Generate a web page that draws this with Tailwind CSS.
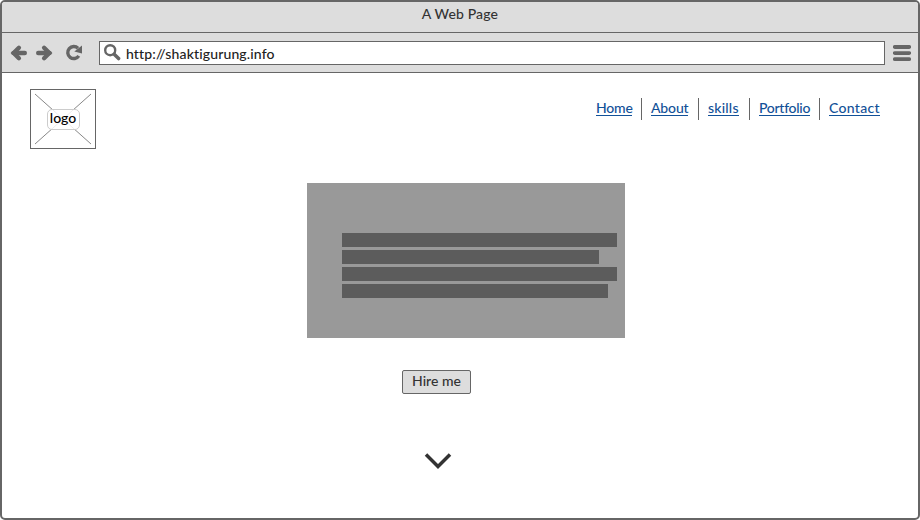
<!DOCTYPE html>
<html lang="en">
<head>
<meta charset="utf-8">
<title>A Web Page</title>
<script src="https://cdn.jsdelivr.net/npm/@tailwindcss/browser@4"></script>
</head>
<body class="bg-white font-['Lato','Open_Sans',sans-serif] text-[14px] leading-[18px] font-medium text-[#333]">
<div class="flex h-[520px] w-[920px] flex-col overflow-hidden rounded-[5px] border-2 border-[#666] bg-white">
  <header class="flex h-[31px] shrink-0 justify-center border-b border-[#666] bg-[#ddd] pt-[3px]">
    <span class="tracking-[0.15px] whitespace-nowrap">A Web Page</span>
  </header>
  <div class="flex h-10 shrink-0 items-center border-b border-[#666] bg-[#ddd] pl-[8px]">
    <svg class="mr-[8px]" width="18" height="18" viewBox="0 0 18 18" fill="none" stroke="#666" stroke-width="4.4"><path d="M3.500 9H14.800" stroke-linecap="round"/><path d="M8.900 3.800L3.700 9L8.900 14.200" stroke-linecap="round"/></svg>
    <svg class="mr-[11px]" width="18" height="18" viewBox="0 0 18 18" fill="none" stroke="#666" stroke-width="4.4"><path d="M2.200 9H13.500" stroke-linecap="round"/><path d="M8.100 3.800L13.300 9L8.100 14.200" stroke-linecap="round"/></svg>
    <svg class="mr-[16px]" width="18" height="18" viewBox="0 0 18 18"><path d="M13 4.300A6 6 0 1 0 13.800 11.800" fill="none" stroke="#666" stroke-width="3.400"/><path d="M17 1.500V9.600L9.300 7.600Z" fill="#666"/></svg>
    <div class="flex h-6 w-[786px] items-center border border-[#666] bg-white pl-1">
      <svg class="mr-[5px] mb-px" width="17" height="17" viewBox="0 0 17 17" fill="none" stroke="#666"><circle cx="6.2" cy="6.2" r="5" stroke-width="2.4"/><path d="M10.200 10.200L14.600 14.600" stroke-width="3.5" stroke-linecap="round"/></svg>
      <span class="pt-[2px] tracking-[0.14px] text-[#222]">http://shaktigurung.info</span>
    </div>
    <svg class="ml-[8px]" width="18" height="18" viewBox="0 0 18 18" stroke="#666" stroke-width="3.8" stroke-linecap="round"><path d="M1.800 3H16.200M1.800 9.100H16.200M1.800 15.200H16.200"/></svg>
  </div>
  <main class="flex flex-1 flex-col">
    <div class="flex h-[110px] items-start justify-between pt-4 pl-7 pr-[38px]">
      <div class="relative flex h-[60px] w-[66px] items-center justify-center border border-[#666]">
        <svg class="absolute inset-0" width="64" height="58" viewBox="0 0 64 58" stroke="#888" stroke-width="1"><path d="M4 4L60 54M60 4L4 54"/></svg>
        <span class="relative flex h-[21px] w-[33px] items-center justify-center rounded-[5px] border border-[#ccc] bg-white/85 pb-[2px] text-black">logo</span>
      </div>
      <nav class="mt-[9px] flex h-[22px] text-[#125198]">
        <a class="mr-[9px] box-content flex w-[45px] border-r border-[#666]"><span class="h-[18px] w-[36px] border-b border-current pt-px tracking-[-0.2px] whitespace-nowrap">Home</span></a>
        <a class="mr-[9px] box-content flex w-[47px] border-r border-[#666]"><span class="h-[18px] w-[37px] border-b border-current pt-px tracking-[-0.15px] whitespace-nowrap">About</span></a>
        <a class="mr-[9px] box-content flex w-[41px] border-r border-[#666]"><span class="h-[18px] w-[31px] border-b border-current pt-px tracking-[0.2px] whitespace-nowrap">skills</span></a>
        <a class="mr-[9px] box-content flex w-[60px] border-r border-[#666]"><span class="h-[18px] w-[51px] border-b border-current pt-px tracking-[-0.28px] whitespace-nowrap">Portfolio</span></a>
        <a class="flex"><span class="h-[18px] w-[51px] border-b border-current pt-px tracking-[0.3px] whitespace-nowrap">Contact</span></a>
      </nav>
    </div>
    <section class="ml-[305px] flex h-[155px] w-[318px] flex-col gap-[3px] bg-[#999] pt-[50px] pl-[35px]">
      <div class="h-[14px] w-[275px] bg-[#5c5c5c]"></div>
      <div class="h-[14px] w-[257px] bg-[#5c5c5c]"></div>
      <div class="h-[14px] w-[275px] bg-[#5c5c5c]"></div>
      <div class="h-[14px] w-[266px] bg-[#5c5c5c]"></div>
    </section>
    <button class="mt-8 ml-[400px] flex h-6 w-[69px] items-center justify-center rounded-[2px] border border-[#666] bg-[#ddd] pb-[2px] whitespace-nowrap">Hire me</button>
    <svg class="mt-[57px] ml-[421px]" width="30" height="20" viewBox="0 0 30 20" fill="none" stroke="#333" stroke-width="3.5"><path d="M3 3.500L15 15.500L27 3.500"/></svg>
  </main>
</div>
</body>
</html>
